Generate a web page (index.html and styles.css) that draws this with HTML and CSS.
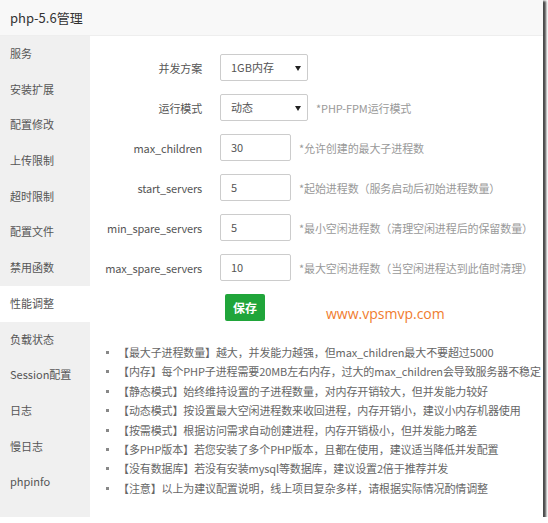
FILE: index.html
```html
<!DOCTYPE html>
<html lang="zh-CN">
<head>
<meta charset="utf-8">
<title>php-5.6管理</title>
<link rel="stylesheet" href="styles.css">
</head>
<body>
<div class="frame">
  <div class="header">php-5.6管理</div>
  <div class="body">
    <ul class="side">
      <li>服务</li>
      <li>安装扩展</li>
      <li>配置修改</li>
      <li>上传限制</li>
      <li>超时限制</li>
      <li>配置文件</li>
      <li>禁用函数</li>
      <li class="active">性能调整</li>
      <li>负载状态</li>
      <li>Session配置</li>
      <li>日志</li>
      <li>慢日志</li>
      <li>phpinfo</li>
    </ul>
    <div class="main">
      <div class="form">
        <div class="row">
          <span class="label">并发方案</span>
          <span class="select">1GB内存</span>
        </div>
        <div class="row">
          <span class="label">运行模式</span>
          <span class="select">动态</span>
          <span class="hint sel-hint">*PHP-FPM运行模式</span>
        </div>
        <div class="row">
          <span class="label">max_children</span>
          <span class="input">30</span>
          <span class="hint">*允许创建的最大子进程数</span>
        </div>
        <div class="row">
          <span class="label">start_servers</span>
          <span class="input">5</span>
          <span class="hint">*起始进程数（服务启动后初始进程数量）</span>
        </div>
        <div class="row">
          <span class="label">min_spare_servers</span>
          <span class="input">5</span>
          <span class="hint">*最小空闲进程数（清理空闲进程后的保留数量）</span>
        </div>
        <div class="row">
          <span class="label">max_spare_servers</span>
          <span class="input">10</span>
          <span class="hint">*最大空闲进程数（当空闲进程达到此值时清理）</span>
        </div>
        <div class="row btn-row">
          <span class="label"></span>
          <button class="save">保存</button>
        </div>
        <div class="watermark">www.vpsmvp.com</div>
      </div>
      <ul class="tips">
        <li>【最大子进程数量】越大，并发能力越强，但max_children最大不要超过5000</li>
        <li>【内存】每个PHP子进程需要20MB左右内存，过大的max_children会导致服务器不稳定</li>
        <li>【静态模式】始终维持设置的子进程数量，对内存开销较大，但并发能力较好</li>
        <li>【动态模式】按设置最大空闲进程数来收回进程，内存开销小，建议小内存机器使用</li>
        <li>【按需模式】根据访问需求自动创建进程，内存开销极小，但并发能力略差</li>
        <li>【多PHP版本】若您安装了多个PHP版本，且都在使用，建议适当降低并发配置</li>
        <li>【没有数据库】若没有安装mysql等数据库，建议设置2倍于推荐并发</li>
        <li>【注意】以上为建议配置说明，线上项目复杂多样，请根据实际情况酌情调整</li>
      </ul>
    </div>
  </div>
</div>
</body>
</html>
```

FILE: styles.css
```css
html, body {
  margin: 0;
  padding: 0;
  background: #fff;
}
body {
  font-family: "Noto Sans CJK SC", sans-serif;
  font-size: 11px;
  color: #555;
}
.frame {
  width: 543px;
  height: 517px;
  box-shadow: 2px 2px 2px 1px #4a4a4a;
  overflow: hidden;
  display: flex;
  flex-direction: column;
  background: #fff;
}
.header {
  height: 35px;
  line-height: 35px;
  padding-left: 10px;
  background: #f8f8f8;
  border-bottom: 1px solid #eee;
  font-size: 13px;
  color: #333;
  flex: none;
}
.body {
  flex: 1;
  display: flex;
  min-height: 0;
}
.side {
  list-style: none;
  margin: 0;
  padding: 0;
  width: 90px;
  background: #f0f0f0;
  flex: none;
}
.side li {
  height: 35.7px;
  line-height: 35.7px;
  padding-left: 10px;
  color: #555;
}
.side li.active {
  background: #fff;
}
.main {
  flex: 1;
  padding-top: 18px;
}
.form {
  position: relative;
  display: flex;
  flex-direction: column;
  gap: 13px;
}
.row {
  display: flex;
  align-items: center;
  height: 27px;
}
.label {
  width: 112px;
  text-align: right;
  padding-right: 18px;
  color: #555;
  flex: none;
  letter-spacing: -0.15px;
}
.select, .input {
  box-sizing: border-box;
  height: 27px;
  line-height: 25px;
  border: 1px solid #ccc;
  border-radius: 2px;
  padding-left: 10px;
  color: #555;
  flex: none;
}
.select {
  width: 88px;
  position: relative;
}
.select::after {
  content: "";
  position: absolute;
  right: 6px;
  top: 11px;
  border-left: 3px solid transparent;
  border-right: 3px solid transparent;
  border-top: 5px solid #222;
}
.input {
  width: 71px;
}
.hint {
  color: #999;
  padding-left: 8px;
  white-space: nowrap;
  letter-spacing: -0.1px;
}
.sel-hint {
  padding-left: 8px;
}
.btn-row {
  height: 27px;
}
.save {
  margin-left: 5px;
  width: 40px;
  height: 27px;
  border: none;
  border-radius: 2px;
  background: #20a53a;
  color: #fff;
  font-family: "Noto Sans CJK SC", sans-serif;
  font-size: 12px;
  font-weight: bold;
  padding: 0;
}
.watermark {
  position: absolute;
  left: 236px;
  top: 250px;
  color: #f07c2e;
  font-size: 14px;
  font-family: "Open Sans", sans-serif;
}
.tips {
  margin: 22px 0 0;
  padding: 0 0 0 28px;
  list-style: none;
}
.tips li {
  position: relative;
  height: 19.4px;
  line-height: 19.4px;
  color: #666;
  white-space: nowrap;
  letter-spacing: -0.12px;
}
.tips li::before {
  content: "";
  position: absolute;
  left: -12px;
  top: 8px;
  width: 3px;
  height: 3px;
  background: #888;
}
```
